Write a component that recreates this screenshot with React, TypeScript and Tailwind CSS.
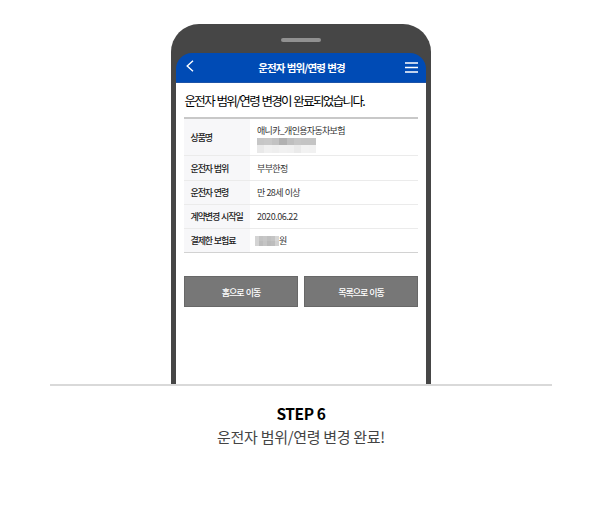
import type { ReactNode } from 'react';

interface InfoRow {
  label: string;
  height: string;
  value: ReactNode;
}

interface MosaicProps {
  rows: string[][];
  className: string;
}

// Pixelated block that hides personal data
function Mosaic({ rows, className }: MosaicProps) {
  return (
    <div className={`flex flex-col ${className}`}>
      {rows.map((row, i) => (
        <div key={i} className="flex flex-1">
          {row.map((color, j) => (
            <span key={j} className="flex-1" style={{ backgroundColor: color }} />
          ))}
        </div>
      ))}
    </div>
  );
}

const productMosaic = [
  ['#c6c6c6', '#c8c8c8', '#c2c2c2', '#b1b1b1', '#bfbfbf', '#c6c6c6', '#c4c4c4', '#c4c4c4'],
  ['#e9e9e9', '#f0f0f0', '#eeeeee', '#f1f1f1', '#f0f0f0', '#eaeaea', '#f2f2f2', '#f1f1f1'],
];

const priceMosaic = [
  ['#d4d4d4', '#c3c3c3', '#c7c7c7', '#c0c0c0', '#c4c4c4', '#d6d6d6'],
  ['#d4d4d4', '#bdbdbd', '#c5c5c5', '#bababa', '#bdbdbd', '#d0d0d0'],
];

const infoRows: InfoRow[] = [
  {
    label: '상품명',
    height: 'h-[36px]',
    value: (
      <div className="flex flex-col gap-px pt-px">
        <span className="leading-[13px] tracking-[-0.7px]">애니카_개인용자동차보험</span>
        <Mosaic rows={productMosaic} className="h-[15px] w-[59px]" />
      </div>
    ),
  },
  {
    label: '운전자 범위',
    height: 'h-[25px]',
    value: <span className="tracking-[-0.6px]">부부한정</span>,
  },
  {
    label: '운전자 연령',
    height: 'h-[24px]',
    value: <span className="tracking-[-0.65px] [word-spacing:0.5px]">만 28세 이상</span>,
  },
  {
    label: '계약변경 시작일',
    height: 'h-[24px]',
    value: <span className="tracking-[-0.45px]">2020.06.22</span>,
  },
  {
    label: '결제한 보험료',
    height: 'h-[24px]',
    value: (
      <div className="-ml-[2px] flex items-center">
        <Mosaic rows={priceMosaic} className="h-[10px] w-[24px]" />
        <span>원</span>
      </div>
    ),
  },
];

function PhoneHeader() {
  return (
    <header className="flex h-[30px] items-center justify-between rounded-t-[16px] border-b border-[#1c53a8] bg-[#004bb5] pl-[10px] pr-[8px] text-white">
      <svg width="8" height="12" viewBox="0 0 8 12" fill="none" stroke="currentColor" strokeWidth="1.4" className="mb-[4px]">
        <path d="M7 0.7 1.2 6 7 11.3" />
      </svg>
      <h1 className="ml-[4px] pt-px text-[10.5px] font-bold leading-none tracking-[-0.9px] [word-spacing:0.8px]">
        운전자 범위/연령 변경
      </h1>
      <svg width="13" height="11" viewBox="0 0 13 11" fill="none" stroke="currentColor" strokeWidth="1.3" className="mb-px">
        <path d="M0 1h13M0 5.5h13M0 10h13" />
      </svg>
    </header>
  );
}

function InfoTable() {
  return (
    <div className="border-b border-[#d2d2d2] border-t-2 border-t-[#c8c8c8]">
      {infoRows.map((row, i) => (
        <div key={row.label} className={`flex text-[9px] ${row.height} ${i > 0 ? 'border-t border-[#ebebeb]' : ''}`}>
          <div className="flex w-[66px] items-center bg-[#f7f7f9] pl-[6.5px] pt-px font-medium tracking-[-1.1px] text-[#222] [word-spacing:0.9px]">
            {row.label}
          </div>
          <div className="flex items-center pl-[7px] pt-px text-[#333]">{row.value}</div>
        </div>
      ))}
    </div>
  );
}

function ActionButton({ children }: { children: ReactNode }) {
  return (
    <button className="h-[31px] flex-1 border border-[#686868] bg-[#777] pt-[2px] text-[9px] font-medium tracking-[-1px] text-white [word-spacing:1px]">
      {children}
    </button>
  );
}

function Phone() {
  return (
    <div className="flex h-[360px] w-[260px] flex-col rounded-t-[28px] bg-[#464646] px-[5px]">
      <div className="mx-auto mt-[14px] h-[4px] w-[40px] rounded-full bg-[#919191]" />
      <div className="mt-[11px] flex flex-1 flex-col">
        <PhoneHeader />
        <div className="flex-1 bg-white px-[8px]">
          <p className="h-[34px] whitespace-nowrap pl-[0.5px] pt-[8px] text-[12.5px] leading-[20px] tracking-[-1.65px] text-black [word-spacing:1.2px]">
            운전자 범위/연령 변경이 완료되었습니다.
          </p>
          <InfoTable />
          <div className="mt-[23px] flex gap-[6px]">
            <ActionButton>홈으로 이동</ActionButton>
            <ActionButton>목록으로 이동</ActionButton>
          </div>
        </div>
      </div>
    </div>
  );
}

export default function App() {
  return (
    <main className="h-[509px] w-[602px] overflow-hidden bg-white pt-[24px] font-['Noto_Sans_CJK_KR',sans-serif]">
      <div className="mx-auto flex w-[502px] justify-center border-b-2 border-[#d9d9d9]">
        <Phone />
      </div>
      <div className="mt-[15px] text-center">
        <h2 className="text-[15.5px] font-bold leading-[24px] tracking-[-0.4px] text-black">STEP 6</h2>
        <p className="text-[15px] leading-[24px] tracking-[-0.3px] text-[#444]">운전자 범위/연령 변경 완료!</p>
      </div>
    </main>
  );
}
